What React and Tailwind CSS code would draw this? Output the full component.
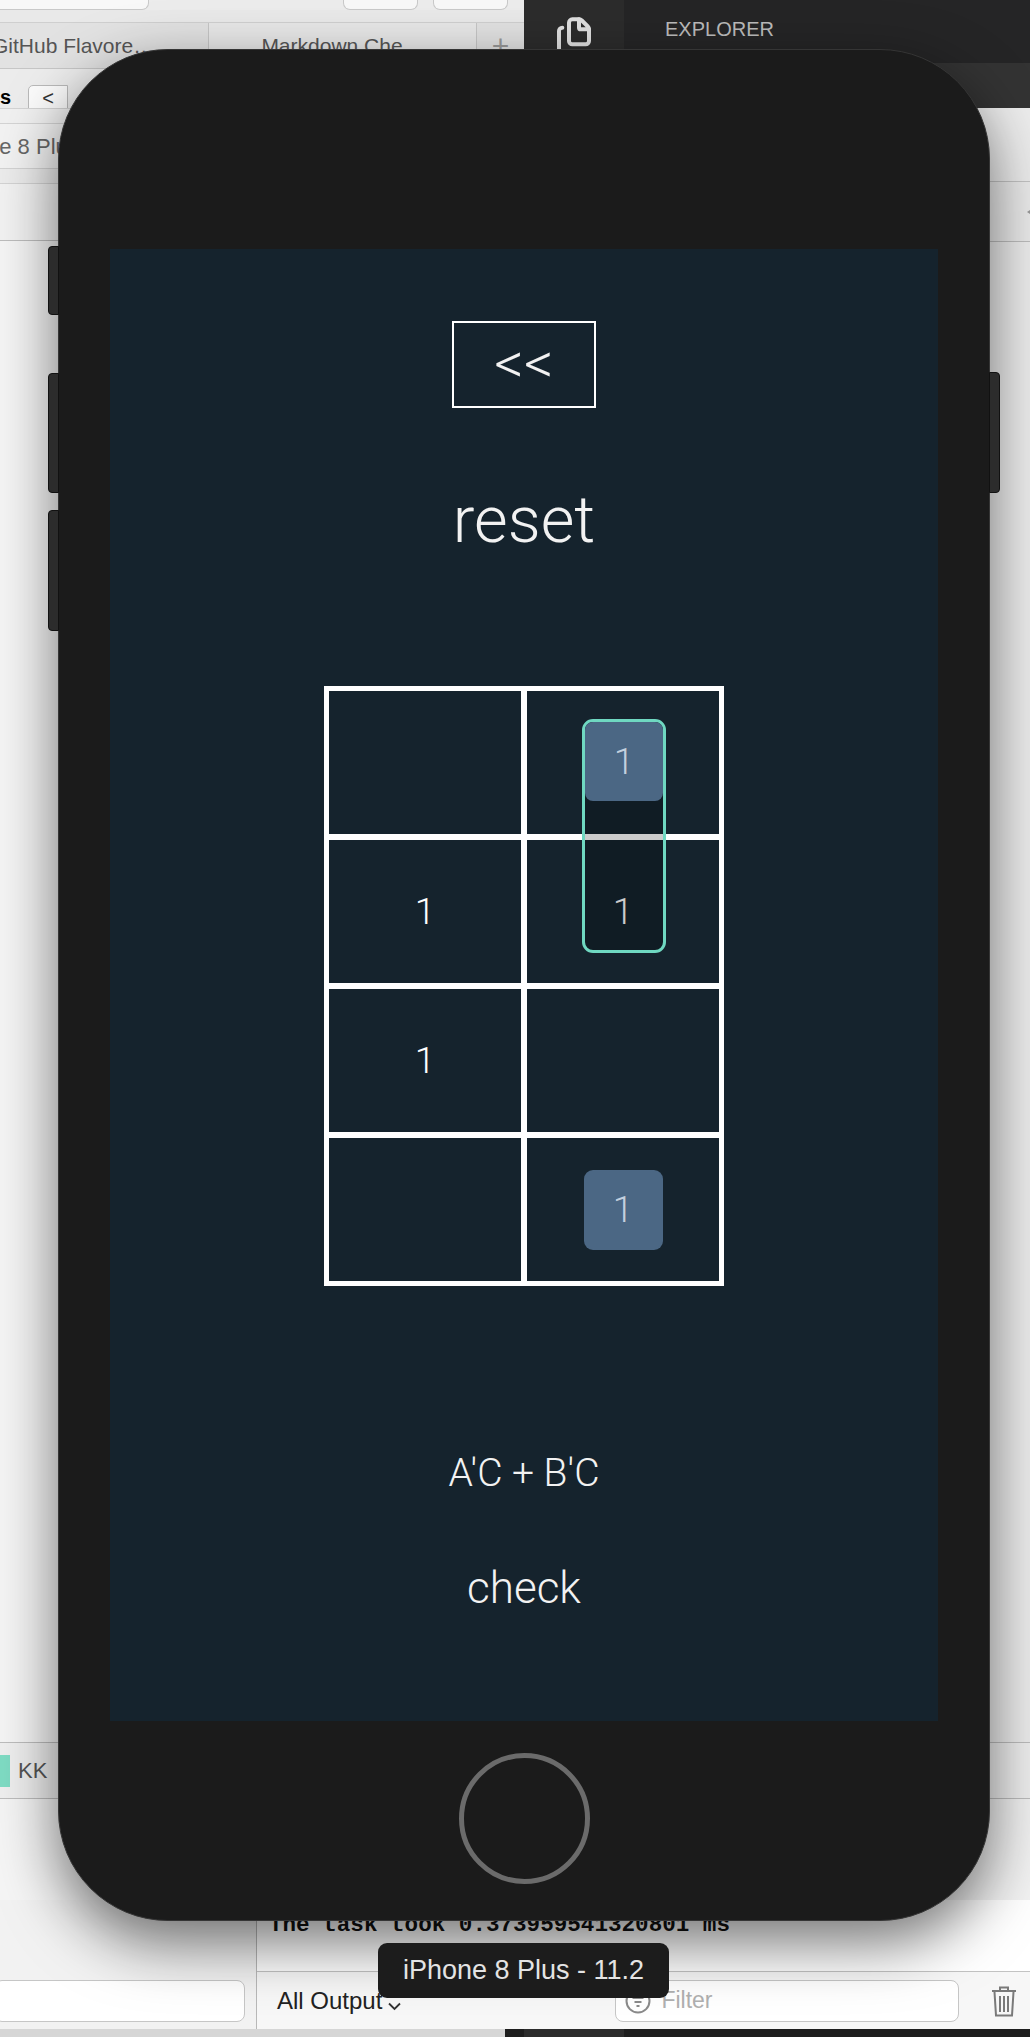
import { Files } from "lucide-react";

function TrashIcon() {
  return (
    <svg width="26" height="31" viewBox="0 0 26 31" fill="none" stroke="#7a7a7a" strokeWidth="2">
      <path d="M9 4V1.5h8V4" />
      <path d="M1 5h24" />
      <path d="M3.5 6l1.5 23.5h16l1.5-23.5" />
      <path d="M9 10v16M13 10v16M17 10v16" />
    </svg>
  );
}

function FilterIcon() {
  return (
    <svg width="26" height="26" viewBox="0 0 26 26" fill="none" stroke="#8a8a8a" strokeWidth="2">
      <circle cx="13" cy="13" r="11.5" />
      <path d="M7.5 10h11M9.5 14h7M11.5 18h3" />
    </svg>
  );
}

function Cell({ value, boxed }) {
  return (
    <div className="flex h-[143px] items-center justify-center bg-[#15232d]">
      {boxed ? (
        <div className="flex h-[80px] w-[79px] items-center justify-center rounded-[9px] bg-[#4b6784] text-[#c3d0de]">
          {value}
        </div>
      ) : (
        <span className="text-white">{value}</span>
      )}
    </div>
  );
}

function KMap() {
  return (
    <div className="relative mt-[133px]">
      <div className="grid w-[400px] grid-cols-2 gap-[6px] bg-white p-[5px] text-[37px] leading-none">
        <Cell />
        <Cell />
        <Cell value="1" />
        <Cell value="1" />
        <Cell value="1" />
        <Cell />
        <Cell />
        <Cell value="1" boxed />
      </div>
      {/* selected group */}
      <div className="absolute left-[258px] top-[33px] flex h-[234px] w-[84px] flex-col rounded-[11px] border-[3px] border-[#6fd8c1] bg-black/20 text-[37px] leading-none">
        <div className="flex h-[79px] items-center justify-center rounded-[8px] bg-[#4b6784] text-[#c3d0de]">1</div>
      </div>
    </div>
  );
}

function Phone() {
  return (
    <div className="absolute left-[58px] top-[49px] flex h-[1872px] w-[932px] flex-col items-center rounded-[110px] border border-[#353535] bg-[#1b1b1b] pt-[199px] shadow-[0_22px_60px_rgba(0,0,0,0.55)]">
      <div className="absolute left-[-11px] top-[196px] h-[69px] w-[11px] rounded-l-[4px] border border-[#111] bg-[#2c2c2c]" />
      <div className="absolute left-[-11px] top-[323px] h-[120px] w-[11px] rounded-l-[4px] border border-[#111] bg-[#2c2c2c]" />
      <div className="absolute left-[-11px] top-[460px] h-[121px] w-[11px] rounded-l-[4px] border border-[#111] bg-[#2c2c2c]" />
      <div className="absolute right-[-11px] top-[322px] h-[121px] w-[11px] rounded-r-[4px] border border-[#111] bg-[#2c2c2c]" />

      <div className="flex h-[1472px] w-[828px] flex-col items-center bg-[#15232d] font-['Roboto',sans-serif] font-light text-[#f2f2f2]">
        <button className="mt-[72px] flex h-[87px] w-[144px] items-center justify-center border-2 border-white pb-[4px] text-[58px] leading-none">
          &lt;&lt;
        </button>
        <div className="mt-[80px] text-[65px] leading-none">reset</div>
        <KMap />
        <div className="mt-[168px] text-[39px] leading-none">A'C + B'C</div>
        <div className="mt-[73px] text-[44px] leading-none">check</div>
      </div>

      <div className="mt-[32px] h-[131px] w-[131px] rounded-full border-[5px] border-[#6b6b6b]" />
    </div>
  );
}

function LeftApp() {
  return (
    <div className="flex w-[524px] flex-col bg-[#f4f4f4] font-['Liberation_Sans',sans-serif]">
      <div className="flex h-[10px] items-end bg-[#ececec]">
        <div className="h-[12px] w-[149px] rounded-br-[7px] border-b border-r border-[#c9c9c9] bg-[#f8f8f8]" />
        <div className="ml-[194px] h-[12px] w-[75px] rounded-b-[7px] border-x border-b border-[#c9c9c9] bg-[#f8f8f8]" />
        <div className="ml-[15px] h-[12px] w-[75px] rounded-b-[7px] border-x border-b border-[#c9c9c9] bg-[#f8f8f8]" />
      </div>
      <div className="h-[13px] border-b border-[#cfcfcf] bg-[#e9e9e9]" />
      <div className="flex h-[46px] border-b border-[#c6c6c6] text-[21px] text-[#555]">
        <div className="flex w-[209px] items-center overflow-hidden border-r border-[#c6c6c6] bg-[#e2e2e2]">
          <span className="-ml-[8px] whitespace-nowrap">GitHub Flavore…</span>
        </div>
        <div className="flex w-[268px] items-center justify-center border-r border-[#c6c6c6] bg-[#e8e8e8]">
          Markdown Che…
        </div>
        <div className="flex flex-1 items-center justify-center bg-[#e2e2e2] text-[30px] font-light text-[#999]">+</div>
      </div>
      <div className="flex h-[39px] items-start overflow-hidden bg-[#ececec] pt-[16px]">
        <span className="text-[20px] font-bold leading-[24px] text-black">s</span>
        <div className="ml-[17px] flex h-[30px] w-[40px] items-start justify-center rounded-l-[5px] border border-[#b9b9b9] bg-[#fbfbfb] text-[20px] leading-[24px] text-[#333]">
          &lt;
        </div>
      </div>
      <div className="h-[16px] border-y border-[#d3d3d3] bg-[#f0f0f0]" />
      <div className="flex h-[44px] items-center overflow-hidden bg-[#f2f2f2] text-[22px] text-[#666]">
        <span className="-ml-[57px] whitespace-nowrap">iPhone 8 Plus</span>
      </div>
      <div className="h-[16px] border-y border-[#d3d3d3] bg-[#ececec]" />
      <div className="h-[57px] border-b border-[#bdbdbd] bg-[#f2f2f2]" />
      <div className="flex-1 bg-[#f5f5f5]" />
      <div className="flex h-[57px] items-center gap-[8px] border-y border-[#bdbdbd] bg-[#efefef]">
        <div className="h-[32px] w-[10px] bg-[#7fdcc4]" />
        <span className="text-[22px] text-[#555]">KK</span>
      </div>
      <div className="h-[101px] bg-[#f5f5f5]" />
    </div>
  );
}

function RightApp() {
  return (
    <div className="flex flex-1 flex-col bg-[#ececec]">
      <div className="flex h-[63px] bg-[#252526]">
        <div className="flex w-[100px] justify-center bg-[#2c2c2c] pt-[16px]">
          <Files size={40} strokeWidth={2.4} color="#e0e0e0" />
        </div>
        <div className="pl-[41px] pt-[17px] font-['Liberation_Sans',sans-serif] text-[20px] leading-[24px] text-[#bbbbbb]">
          EXPLORER
        </div>
      </div>
      <div className="h-[45px] bg-[#333333]" />
      <div className="h-[74px] border-b border-[#c3c3c3] bg-[#ececec]" />
      <div className="flex h-[60px] items-center justify-end border-b border-[#bdbdbd] bg-[#eaeaea]">
        <div className="mr-[-6px] h-0 w-0 border-y-[6px] border-r-[9px] border-y-transparent border-r-[#999]" />
      </div>
      <div className="flex-1 bg-[#ededed]" />
      <div className="h-[57px] border-y border-[#bdbdbd] bg-[#efefef]" />
      <div className="h-[101px] bg-[#f2f2f2]" />
    </div>
  );
}

function Console() {
  return (
    <div className="flex h-[137px] flex-col font-['Liberation_Sans',sans-serif]">
      <div className="flex flex-1">
        <div className="w-[257px] border-r border-[#b8b8b8] bg-[#f2f2f2]">
          <div className="-ml-[6px] mt-[80px] h-[42px] w-[251px] rounded-[8px] border border-[#c6c6c6] bg-white" />
        </div>
        <div className="flex flex-1 flex-col bg-white">
          <div className="h-[72px] border-b border-[#c3c3c3] pl-[12px] pt-[12px] font-['Liberation_Mono',monospace] text-[22.6px] font-bold leading-[26px] text-[#111]">
            The task took 0.373959541320801 ms
          </div>
          <div className="flex flex-1 items-center bg-[#f7f7f7]">
            <span className="ml-[20px] text-[24px] text-[#222]">All Output</span>
            <svg className="ml-[6px] mt-[12px]" width="13" height="9" viewBox="0 0 13 9" fill="none" stroke="#333" strokeWidth="1.8">
              <path d="M1 1.5l5.5 5.5 5.5-5.5" />
            </svg>
            <div className="ml-[214px] flex h-[42px] w-[344px] items-center gap-[10px] rounded-[8px] border border-[#c6c6c6] bg-white pl-[9px]">
              <FilterIcon />
              <span className="text-[23px] text-[#b0b0b0]">Filter</span>
            </div>
            <div className="ml-[32px] mt-[2px]">
              <TrashIcon />
            </div>
          </div>
        </div>
      </div>
      <div className="flex h-[8px]">
        <div className="w-[505px] bg-[#d6d6d6]" />
        <div className="w-[19px] bg-[#1e1e1e]" />
        <div className="w-[100px] bg-[#2c2c2c]" />
        <div className="flex-1 bg-[#1e1e1e]" />
      </div>
    </div>
  );
}

export default function App() {
  return (
    <div className="relative flex h-[2037px] w-[1030px] flex-col overflow-hidden bg-[#ececec]">
      <div className="flex h-[1900px]">
        <LeftApp />
        <RightApp />
      </div>
      <Console />

      <Phone />

      <div className="absolute left-[378px] top-[1943px] flex h-[55px] w-[291px] items-center justify-center rounded-[9px] bg-[#1c1c1c] font-['Liberation_Sans',sans-serif] text-[27px] text-[#e4e4e4]">
        iPhone 8 Plus - 11.2
      </div>
    </div>
  );
}
